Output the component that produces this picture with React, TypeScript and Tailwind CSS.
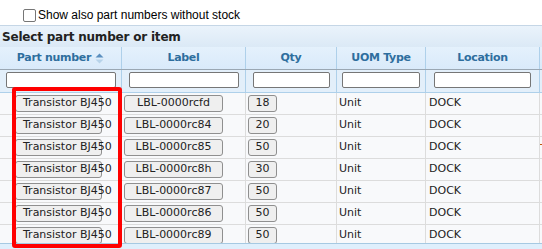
import React from "react";

const rows = [
  { label: "LBL-0000rcfd", qty: "18" },
  { label: "LBL-0000rc84", qty: "20" },
  { label: "LBL-0000rc85", qty: "50", mark: true },
  { label: "LBL-0000rc8h", qty: "30" },
  { label: "LBL-0000rc87", qty: "50" },
  { label: "LBL-0000rc86", qty: "50" },
  { label: "LBL-0000rc89", qty: "50" },
];

const cols = "grid grid-cols-[122px_124px_91px_89px_114px_1fr]";
const btn =
  "h-[17px] flex items-center whitespace-nowrap bg-[#efefef] border border-[#8f8f8f] rounded-[3px] text-[11px] text-[#222]";

const SortIcon = () => (
  <svg width="9" height="11" viewBox="0 0 9 11" className="ml-[4px]">
    <path d="M0.5 4.5 L4.5 0.5 L8.5 4.5 Z" fill="#5b8fbf" />
    <path d="M0.5 6.5 L4.5 10.5 L8.5 6.5 Z" fill="#b7d3ea" />
  </svg>
);

export default function App() {
  const headers = ["Part number", "Label", "Qty", "UOM Type", "Location"];
  const inputWidths = ["w-[110px]", "w-[110px]", "w-[77px]", "w-[78px]", "w-[97px]"];

  return (
    <div className="relative w-[542px] h-[249px] overflow-hidden bg-white font-['DejaVu_Sans',sans-serif]">
      {/* checkbox line */}
      <div className="h-[25px] flex items-center pt-[5px] pl-[23px] font-['Liberation_Sans',Arial,sans-serif] text-[12px] text-black">
        <span className="w-[13px] h-[13px] border border-[#767676] rounded-[2px] bg-white" />
        <span className="ml-[2px]">Show also part numbers without stock</span>
      </div>

      {/* caption */}
      <div className="h-[22px] border-t border-[#c5d6e6] bg-gradient-to-b from-[#eaf3fb] to-[#dbe9f6] flex items-center pl-[2px]">
        <span className="text-[12px] font-bold text-[#222] tracking-[-0.2px]">Select part number or item</span>
      </div>

      {/* header */}
      <div className={`${cols} h-[23px] border-b border-[#9aa7b3] bg-gradient-to-b from-[#e4f1fc] to-[#d9eafa]`}>
        {headers.map((h, i) => (
          <div
            key={h}
            className="flex items-center justify-center border-r border-[#aed0ea] text-[11px] font-bold tracking-[-0.3px] text-[#2e6e9e]"
          >
            {h}
            {i === 0 && <SortIcon />}
          </div>
        ))}
        <div />
      </div>

      {/* filter row */}
      <div className={`${cols} h-[23px] border-b border-[#aed0ea] bg-[#e3effa]`}>
        {inputWidths.map((w, i) => (
          <div key={i} className="flex justify-center pt-[2px] border-r border-[#aed0ea]">
            <input className={`${w} h-[16px] bg-white border border-[#767676] rounded-[2px] outline-none`} />
          </div>
        ))}
        <div />
      </div>

      {/* rows */}
      <div className="h-[150px] overflow-hidden bg-[#f8f9fb]">
        {rows.map((r) => (
          <div key={r.label} className={`${cols} h-[22px] border-b border-[#dcdcdc] text-[11px] text-[#222]`}>
            <div className="flex items-center pl-[15px] border-r border-[#dcdcdc] overflow-visible">
              <span className={`${btn} w-[87px] pl-[7px]`}>Transistor BJ450</span>
            </div>
            <div className="flex items-center pl-[2px] border-r border-[#dcdcdc]">
              <span className={`${btn} w-[99px] justify-center`}>{r.label}</span>
            </div>
            <div className="flex items-center pl-[2px] border-r border-[#dcdcdc]">
              <span className={`${btn} w-[29px] justify-center`}>{r.qty}</span>
            </div>
            <div className="flex items-center pl-[2px] border-r border-[#dcdcdc]">Unit</div>
            <div className="flex items-center pl-[3px] border-r border-[#dcdcdc]">DOCK</div>
            <div className="pt-[7px]">
              {r.mark && <span className="block w-[2px] h-[1px] bg-[#c0550c]" />}
            </div>
          </div>
        ))}
      </div>

      {/* footer */}
      <div className="h-[6px] border-t border-[#a6c9e2] bg-[#dfeffc]" />

      {/* highlight annotation */}
      <div className="absolute left-[12px] top-[87px] w-[110px] h-[161px] border-4 border-[#ff0000] rounded-[3px] pointer-events-none" />
    </div>
  );
}
